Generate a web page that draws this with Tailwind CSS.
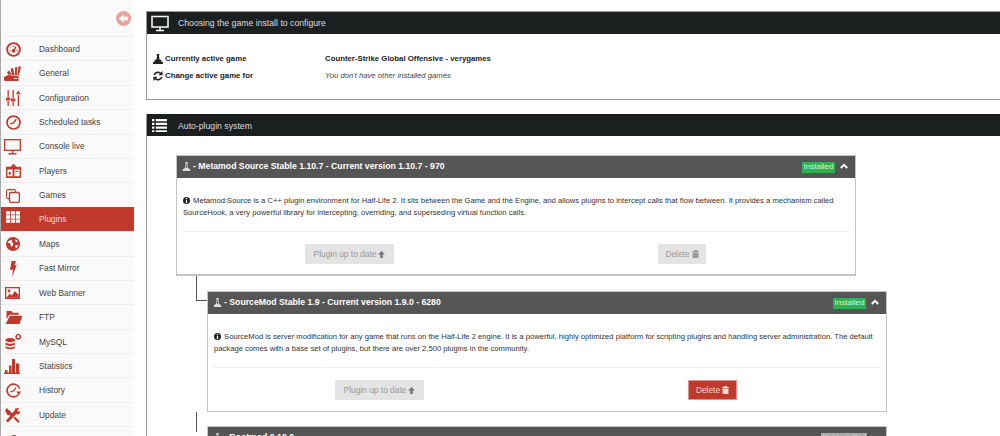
<!DOCTYPE html>
<html lang="en">
<head>
    <meta charset="UTF-8">
    <title>Plugins</title>
    <script src="https://cdn.jsdelivr.net/npm/@tailwindcss/browser@4"></script>
</head>
<body class="bg-white h-[436px] overflow-hidden flex font-['Liberation_Sans',Arial,sans-serif] text-[#333]">
    <!-- sidebar -->
    <aside class="w-[134px] shrink-0 h-[436px] overflow-hidden bg-[#fafafa] border-l border-[#aaa] text-[8.4px] text-[#444]">
        <div class="h-[36px] flex items-center justify-end pr-[3px]">
            <div class="w-[15px] h-[15px] rounded-full bg-[#e8a39b] flex items-center justify-center">
                <svg class="w-[11px] h-[11px]" viewBox="0 0 12 12" fill="#fff"><path d="M1 6l5-4.500V4h5v4H6v2.500z"/></svg>
            </div>
        </div>
        <nav>
            <a class="h-[24.4px] flex items-center border-t border-[#eee] pt-[1px]">
                <svg class="w-[15px] h-[15px] ml-[5px] mr-[18px]" viewBox="0 0 16 16" fill="none" stroke="#c0392b"><circle cx="8" cy="8" r="6.800" stroke-width="2"/><path d="M8 9.500l2.500-4.500" stroke-width="1.500"/><circle cx="8" cy="9.500" r="1.500" fill="#c0392b"/><path d="M3.500 8.500h1.500M4.800 5l1 1M8 3.500v1.500M11.200 9h1.300" stroke-width="1"/></svg>
                <span>Dashboard</span>
            </a>
            <a class="h-[24.4px] flex items-center border-t border-[#eee] pt-[1px]">
                <svg class="w-[17px] h-[15px] ml-[3px] mr-[18px]" viewBox="0 0 17 15" fill="#c0392b"><path d="M0 11l4-2 10 1 .5 1v4H1l-1-1z"/><path d="M4 8.500L3 6l2.500-1.500L7.500 9zM8 9L6.500 3 9 2l1.500 7zM11 9.500L11 1.500 13 1v8zM13.500 9.500L14.500 0 17 1l-2 8.500z"/><path d="M10 12h3v1h-3z" fill="#fafafa"/></svg>
                <span>General</span>
            </a>
            <a class="h-[24.4px] flex items-center border-t border-[#eee] pt-[1px]">
                <svg class="w-[15px] h-[16px] ml-[5px] mr-[18px]" viewBox="0 0 15 16" fill="#c0392b"><path d="M1.500 0h1.300v7H1.500zM1.500 11h1.300v5H1.500zM6.500 0h1.300v8H6.500zM6.500 12h1.300v4H6.500zM11.700 5h1.300v11h-1.300z"/><rect x="0" y="7.500" width="4.300" height="3"/><rect x="5" y="8.500" width="4.300" height="3"/><path d="M12.350 0.500l2.400 3.800h-4.800z"/></svg>
                <span>Configuration</span>
            </a>
            <a class="h-[24.4px] flex items-center border-t border-[#eee] pt-[1px]">
                <svg class="w-[15px] h-[15px] ml-[5px] mr-[18px]" viewBox="0 0 16 16" fill="none" stroke="#c0392b" stroke-width="1.800"><circle cx="8" cy="8" r="6.900"/><path d="M11 4.500L8 8.500 4.500 9.500" stroke-width="1.500"/></svg>
                <span>Scheduled tasks</span>
            </a>
            <a class="h-[24.4px] flex items-center border-t border-[#eee] pt-[1px]">
                <svg class="w-[17px] h-[16px] ml-[3px] mr-[18px]" viewBox="0 0 17 16" fill="none" stroke="#c0392b" stroke-width="1.300"><rect x="0.700" y="0.700" width="15.600" height="10.600"/><path d="M8.500 11.500v3M4.500 14.700h8" stroke-width="1.500"/></svg>
                <span>Console live</span>
            </a>
            <a class="h-[24.4px] flex items-center border-t border-[#eee] pt-[1px]">
                <svg class="w-[15px] h-[14px] ml-[5px] mr-[18px]" viewBox="0 0 16 15" fill="#c0392b"><path d="M0 3h5.500V1.500H7V0h2v1.500h1.500V3H16v12H0zM1.500 6v7h5.500V6zM9 6v7h5.500V6z"/><rect x="3" y="8.500" width="2" height="3"/><rect x="10" y="7.500" width="3" height="1"/></svg>
                <span>Players</span>
            </a>
            <a class="h-[24.4px] flex items-center border-t border-[#eee] pt-[1px]">
                <svg class="w-[14px] h-[14px] ml-[5px] mr-[19px]" viewBox="0 0 16 16" fill="none" stroke="#c0392b" stroke-width="1.200"><path d="M11 4V2.500A1.800 1.800 0 0 0 9.200.700H2.500A1.800 1.800 0 0 0 .700 2.500v6.700A1.800 1.800 0 0 0 2.500 11H4"/><rect x="4" y="4" width="11.300" height="11.300" rx="1.800" stroke-width="1.500"/></svg>
                <span>Games</span>
            </a>
            <a class="h-[24.4px] flex items-center bg-[#c0392b] text-[#f7dcd8] pt-[1px]">
                <svg class="w-[14px] h-[12px] ml-[5px] mr-[19px] mb-[5px]" viewBox="0 0 17 14" fill="#fff"><path d="M0 0h5v4H0zM6 0h5v4H6zM12 0h5v4h-5zM0 5h5v4H0zM6 5h5v4H6zM12 5h5v4h-5zM0 10h5v4H0zM6 10h5v4H6zM12 10h5v4h-5z"/></svg>
                <span>Plugins</span>
            </a>
            <a class="h-[24.4px] flex items-center border-t border-[#eee] pt-[1px]">
                <svg class="w-[14px] h-[14px] ml-[5px] mr-[19px]" viewBox="0 0 16 16"><circle cx="8" cy="8" r="8" fill="#c0392b"/><path d="M2 5.500l3.500-2.500 2 1.500-1 1.500 2 1.500-1.500 3.500-1.500-.5-.5-3-3-1zM11 2.500l2.500 2L12 6l-1.500-1.500zM11 9l3 .5-2 3.500-1.500-1.500z" fill="#fafafa"/></svg>
                <span>Maps</span>
            </a>
            <a class="h-[24.4px] flex items-center border-t border-[#eee] pt-[1px]">
                <svg class="w-[8px] h-[16px] ml-[8px] mr-[22px]" viewBox="0 0 8 16" fill="#c0392b"><path d="M2.500 0H7L5.500 4.500l2.300-.5L3 16l1-7.500L1 9z"/></svg>
                <span>Fast Mirror</span>
            </a>
            <a class="h-[24.4px] flex items-center border-t border-[#eee] pt-[1px]">
                <svg class="w-[15px] h-[12px] ml-[4px] mr-[19px]" viewBox="0 0 15 12"><path d="M0 0h15v12H0z" fill="#c0392b"/><path d="M1.300 1.300h12.400v9.400H1.300z" fill="#fafafa"/><path d="M1.300 10.700l3.500-4 2 1.800 3-4.500 3.900 4v2.700z" fill="#c0392b"/><circle cx="4" cy="4" r="1.400" fill="#c0392b"/></svg>
                <span>Web Banner</span>
            </a>
            <a class="h-[24.4px] flex items-center border-t border-[#eee] pt-[1px]">
                <svg class="w-[18px] h-[13px] ml-[4px] mr-[16px]" viewBox="0 0 18 14" fill="#c0392b"><path d="M1 0h5l1.500 2H14v2H4L1 9z"/><path d="M4.500 5H18l-3 9H0z"/></svg>
                <span>FTP</span>
            </a>
            <a class="h-[24.4px] flex items-center border-t border-[#eee] pt-[1px]">
                <svg class="w-[17px] h-[16px] ml-[4px] mr-[17px]" viewBox="0 0 17 17" fill="#c0392b"><path d="M0 5.500q5-2.500 10 0v2q-5 2.500-10 0zM0 9q5 2.500 10 0v2.500q-5 2.500-10 0zM0 13q5 2.500 10 0v2q-5 2.500-10 0z"/><circle cx="13.500" cy="3" r="2.300" fill="none" stroke="#c0392b" stroke-width="1.500"/></svg>
                <span>MySQL</span>
            </a>
            <a class="h-[24.4px] flex items-center border-t border-[#eee] pt-[1px]">
                <svg class="w-[16px] h-[15px] ml-[3px] mr-[19px]" viewBox="0 0 16 15" fill="#c0392b"><path d="M0 15v-1.500h1V11h2.500v2.500H5V6.500h2.500v7H8V0h3v13.500h1V4.500h3v9h1V15z"/></svg>
                <span>Statistics</span>
            </a>
            <a class="h-[24.4px] flex items-center border-t border-[#eee] pt-[1px]">
                <svg class="w-[15px] h-[15px] ml-[5px] mr-[18px]" viewBox="0 0 16 16" fill="none" stroke="#c0392b" stroke-width="1.700"><path d="M14.500 10A6.800 6.800 0 1 1 14.500 6"/><path d="M10.500 5L8 8.500 4.500 9.500" stroke-width="1.300"/><path d="M11 9h5l-2.500 3.500z" fill="#c0392b" stroke="none"/></svg>
                <span>History</span>
            </a>
            <a class="h-[24.4px] flex items-center border-t border-[#eee] pt-[1px]">
                <svg class="w-[15px] h-[15px] ml-[4px] mr-[19px]" viewBox="0 0 16 16" fill="#c0392b"><path d="M2 0l5.500 5.500 3-3L11 .5 14 0l1 1-2 2 1 1 2-1-.5 3-2 1L12 6.500 3 15.500 1 13.500l4.500-5-1-1-1.500.5L0 3z"/><path d="M9 10.500l1.500-1.500 5 5-1.500 2z"/></svg>
                <span>Update</span>
            </a>
            <a class="h-[24.4px] flex items-center border-t border-[#eee] pt-[1px]">
                <svg class="w-[14px] h-[14px] ml-[6px] mr-[19px] mt-[6px]" viewBox="0 0 16 16" fill="#c0392b"><path d="M6 0h4v3h3v3h3v10H0V6h3V3h3z"/></svg>
            </a>
        </nav>
    </aside>

    <!-- content -->
    <main class="flex-1 min-w-0 pl-[12px] pt-[11px] text-[7.8px]">
        <section class="border border-[#999] border-r-0 h-[89px]">
            <div class="bg-[#1b1f20] h-[22px] flex items-center text-[#ddd] text-[8.7px]">
                <svg class="w-[18px] h-[17px] ml-[4px] mr-[9px]" viewBox="0 0 18 17" fill="none" stroke="#fff" stroke-width="1.500"><rect x="1" y="1.500" width="16" height="10.500"/><path d="M9 12v3M5 15.500h8"/></svg>
                <span class="pt-[2px]">Choosing the game install to configure</span>
            </div>
            <div class="pt-[16px] text-[#222]">
                <div class="flex items-center h-[17px]">
                    <div class="w-[178px] flex items-center pl-[6px] font-bold">
                        <svg class="w-[10px] h-[10px] mr-[2px]" viewBox="0 0 12 12" fill="#222"><path d="M4.500 0h3v2H7l1 5h2v2l2 1v2H0v-2l2-1V7h2l1-5h-.5z"/></svg>
                        <span>Currently active game</span>
                    </div>
                    <span class="font-bold">Counter-Strike Global Offensive - verygames</span>
                </div>
                <div class="flex items-center h-[17px]">
                    <div class="w-[178px] flex items-center pl-[6px] font-bold">
                        <svg class="w-[10px] h-[10px] mr-[2px]" viewBox="0 0 12 12" fill="none" stroke="#222" stroke-width="2"><path d="M1.500 5A4.500 4.500 0 0 1 9.500 3.300M10.500 7A4.500 4.500 0 0 1 2.500 8.700"/><path d="M11.500 0v5h-5zM.500 12V7h5z" fill="#222" stroke="none"/></svg>
                        <span>Change active game for</span>
                    </div>
                    <span class="italic text-[7.7px] text-[#444]">You don't have other installed games</span>
                </div>
            </div>
        </section>

        <section class="mt-[14px] border-l border-[#999]">
            <div class="bg-[#1b1f20] h-[22px] flex items-center text-[#ddd] text-[8.7px]">
                <svg class="w-[15px] h-[14px] ml-[5px] mr-[11px]" viewBox="0 0 16 15" fill="#fff"><path d="M0 1h2.500v2.500H0zM4 1h12v2.500H4zM0 5h2.500v2.500H0zM4 5h12v2.500H4zM0 9h2.500v2.500H0zM4 9h12v2.500H4zM0 13h2.500v2H0zM4 13h12v2H4z"/></svg>
                <span class="pt-[4px]">Auto-plugin system</span>
            </div>

            <div class="pt-[19px] pl-[29px]">
                <article class="w-[680px] h-[121px] border border-[#c4c4c4] border-b-2">
                    <div class="bg-[#555] h-[22px] flex items-center justify-between pl-[5px] pr-[7px] text-white font-bold text-[8.7px]">
                        <div class="flex items-center">
                            <svg class="w-[9px] h-[9px] mr-[2px]" viewBox="0 0 12 12" fill="#ddd"><path d="M4.500 0h3v1.500H7l1 6 3 2.500v2H1v-2l3-2.500 1-6h-.5zM5.700 3l-.7 4.500h2L6.300 3z" fill-rule="evenodd"/></svg>
                            <span>- Metamod Source Stable 1.10.7 - Current version 1.10.7 - 970</span>
                        </div>
                        <div class="flex items-center gap-[5px]">
                            <span class="bg-[#2fb14f] text-[#d9f5df] h-[11px] w-[33px] justify-center flex items-center text-[8px] font-normal">Installed</span>
                            <svg class="w-[8px] h-[6px] mb-[3px]" viewBox="0 0 10 7" fill="none" stroke="#fff" stroke-width="2.400"><path d="M1 6l4-4 4 4"/></svg>
                        </div>
                    </div>
                    <div class="px-[6px] pt-[17px]">
                        <p class="text-[7.65px] leading-[12px] text-[#333] pb-[12px] border-b border-[#eee]"><svg class="inline w-[7px] h-[7px] mr-[1px] align-[-0.5px]" viewBox="0 0 8 8"><circle cx="4" cy="4" r="4" fill="#222"/><path d="M3.300 1.200h1.400v1.300H3.300zM3.300 3.300h1.400v3.500H3.300z" fill="#fff"/></svg> Metamod:Source is a C++ plugin environment for Half-Life 2. It sits between the Game and the Engine, and allows plugins to intercept calls that flow between. It provides a mechanism called SourceHook, a very powerful library for intercepting, overriding, and superseding virtual function calls.</p>
                        <div class="flex pt-[12px] text-[8.4px]">
                            <div class="ml-[122px] w-[89px] h-[20px] bg-[#e4e4e4] text-[#999] flex items-center justify-center">
                                <span>Plugin up to date</span>
                                <svg class="w-[7px] h-[7px] ml-[2px]" viewBox="0 0 8 8" fill="#777"><path d="M4 0l4 4H5.500v4h-3V4H0z"/></svg>
                            </div>
                            <div class="ml-[264px] w-[48px] h-[20px] bg-[#e4e4e4] text-[#999] flex items-center justify-center">
                                <span>Delete</span>
                                <svg class="w-[7px] h-[8px] ml-[2px]" viewBox="0 0 7 8" fill="#999"><path d="M0 1h2V0h3v1h2v1H0zM.500 2.500h6V8h-6z"/></svg>
                            </div>
                        </div>
                    </div>
                </article>

                <!-- child plugins hang off the tree line -->
                <div class="ml-[20px] border-l border-[#555] h-[15px] w-0"></div>
                <div class="relative pl-[31px]">
                    <div class="absolute left-[20px] top-0 h-[10px] w-[11px] border-l border-b border-[#555]"></div>
                    <article class="w-[680px] h-[121px] border border-[#c4c4c4]">
                        <div class="bg-[#555] h-[22px] flex items-center justify-between pl-[5px] pr-[7px] text-white font-bold text-[8.7px]">
                            <div class="flex items-center">
                                <svg class="w-[9px] h-[9px] mr-[2px]" viewBox="0 0 12 12" fill="#ddd"><path d="M4.500 0h3v1.500H7l1 6 3 2.500v2H1v-2l3-2.500 1-6h-.5zM5.700 3l-.7 4.500h2L6.300 3z" fill-rule="evenodd"/></svg>
                                <span>- SourceMod Stable 1.9 - Current version 1.9.0 - 6280</span>
                            </div>
                            <div class="flex items-center gap-[5px]">
                                <span class="bg-[#2fb14f] text-[#d9f5df] h-[11px] w-[33px] justify-center flex items-center text-[8px] font-normal">Installed</span>
                                <svg class="w-[8px] h-[6px] mb-[3px]" viewBox="0 0 10 7" fill="none" stroke="#fff" stroke-width="2.400"><path d="M1 6l4-4 4 4"/></svg>
                            </div>
                        </div>
                        <div class="px-[6px] pt-[17px]">
                            <p class="text-[7.65px] leading-[12px] text-[#333] pb-[12px] border-b border-[#eee]"><svg class="inline w-[7px] h-[7px] mr-[1px] align-[-0.5px]" viewBox="0 0 8 8"><circle cx="4" cy="4" r="4" fill="#222"/><path d="M3.300 1.200h1.400v1.300H3.300zM3.300 3.300h1.400v3.500H3.300z" fill="#fff"/></svg> SourceMod is server modification for any game that runs on the Half-Life 2 engine. It is a powerful, highly optimized platform for scripting plugins and handling server administration. The default package comes with a base set of plugins, but there are over 2,500 plugins in the community.</p>
                            <div class="flex pt-[12px] text-[8.4px]">
                                <div class="ml-[121px] w-[89px] h-[20px] bg-[#e4e4e4] text-[#999] flex items-center justify-center">
                                    <span>Plugin up to date</span>
                                    <svg class="w-[7px] h-[7px] ml-[2px]" viewBox="0 0 8 8" fill="#777"><path d="M4 0l4 4H5.500v4h-3V4H0z"/></svg>
                                </div>
                                <div class="ml-[264px] w-[49px] h-[20px] bg-[#c0392b] border border-[#e3938a] text-[#f5d5d0] flex items-center justify-center">
                                    <span>Delete</span>
                                    <svg class="w-[7px] h-[8px] ml-[2px]" viewBox="0 0 7 8" fill="#f5d5d0"><path d="M0 1h2V0h3v1h2v1H0zM.500 2.500h6V8h-6z"/></svg>
                                </div>
                            </div>
                        </div>
                    </article>
                    <div class="absolute left-[20px] top-[121px] h-[20px] border-l border-[#555]"></div>
                    <article class="mt-[14px] w-[680px] border border-[#c4c4c4]">
                        <div class="bg-[#555] h-[22px] flex items-center justify-between pl-[5px] pr-[7px] text-white font-bold text-[8.7px]">
                            <div class="flex items-center">
                                <svg class="w-[9px] h-[9px] mr-[2px]" viewBox="0 0 12 12" fill="#ddd"><path d="M4.500 0h3v1.500H7l1 6 3 2.500v2H1v-2l3-2.500 1-6h-.5zM5.700 3l-.7 4.500h2L6.300 3z" fill-rule="evenodd"/></svg>
                                <span>- Rootmod 0.10.0</span>
                            </div>
                            <span class="bg-[#aaa] text-[#eee] h-[11px] w-[46px] flex items-center text-[8px] font-normal justify-center mr-[12px]">Not installed</span>
                        </div>
                    </article>
                </div>
            </div>
        </section>
    </main>
</body>
</html>
